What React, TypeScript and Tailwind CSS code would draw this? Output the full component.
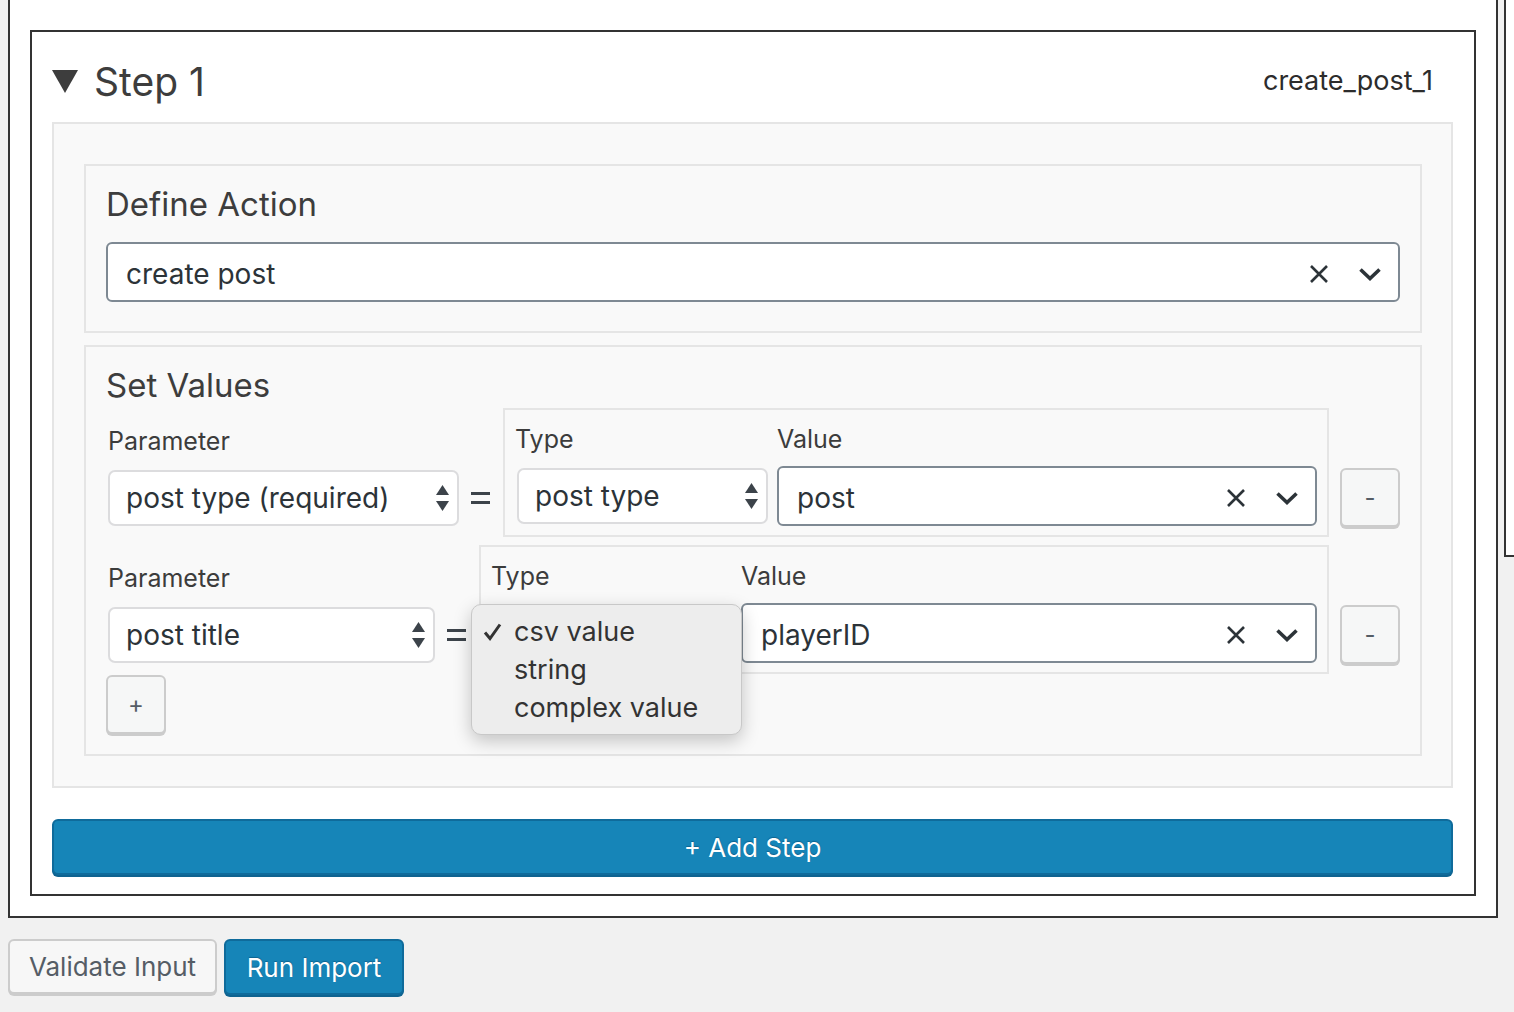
import React from "react";

function XIcon() {
  return (
    <svg width="20" height="20" viewBox="0 0 20 20" className="shrink-0">
      <path d="M2 2 L18 18 M18 2 L2 18" stroke="#2c3338" strokeWidth="2.6" fill="none" />
    </svg>
  );
}

function Chevron() {
  return (
    <svg width="24" height="16" viewBox="0 0 24 16" className="shrink-0">
      <path d="M2.5 3.5 L12 12.5 L21.5 3.5" stroke="#2c3338" strokeWidth="3.6" fill="none" />
    </svg>
  );
}

function Stepper() {
  return (
    <svg width="13" height="26" viewBox="0 0 13 26" className="shrink-0">
      <polygon points="0,10 6.5,0 13,10" fill="#3c434a" />
      <polygon points="0,16 13,16 6.5,26" fill="#3c434a" />
    </svg>
  );
}

function NativeSelect({ text, className }: { text: string; className: string }) {
  return (
    <div
      className={
        "h-[56px] rounded-[7px] border-2 border-[#dcdcde] bg-white flex items-center justify-between pl-[16px] pr-[8px] text-[28px] text-[#2c3338] " +
        className
      }
    >
      <span>{text}</span>
      <Stepper />
    </div>
  );
}

function Combo({ text, className = "" }: { text: string; className?: string }) {
  return (
    <div
      className={
        "h-[60px] rounded-[6px] border-2 border-[#7e8993] bg-white flex items-center pl-[18px] pr-[16px] pt-[3px] text-[28px] text-[#2c3338] " +
        className
      }
    >
      <span className="flex-1">{text}</span>
      <XIcon />
      <span className="w-[29px]" />
      <Chevron />
    </div>
  );
}

function SmallButton({ label }: { label: string }) {
  return (
    <button className="w-[60px] h-[59px] rounded-[6px] border-2 border-[#cccccc] bg-[#f6f7f7] shadow-[0_2px_0_#cccccc] text-[24px] text-[#555d66] flex items-center justify-center">
      {label}
    </button>
  );
}

function Label({ children }: { children: React.ReactNode }) {
  return <div className="h-[30px] leading-[30px] text-[25px] text-[#3c3c3c]">{children}</div>;
}

function Equals() {
  return (
    <div className="self-end mb-[11px] h-[56px] flex items-center">
      <svg width="19" height="12" viewBox="0 0 19 12">
        <rect x="0" y="0" width="19" height="3" fill="#3c434a" />
        <rect x="0" y="9" width="19" height="3" fill="#3c434a" />
      </svg>
    </div>
  );
}

function ParamRow({
  param,
  paramWidth,
  typeText,
  typeWidth,
  value,
  open,
}: {
  param: string;
  paramWidth: string;
  typeText: string;
  typeWidth: string;
  value: string;
  open?: boolean;
}) {
  return (
    <div className="flex items-end">
      <div className="ml-[2px] mb-[11px] flex flex-col">
        <Label>Parameter</Label>
        <NativeSelect text={param} className={"mt-[14px] " + paramWidth} />
      </div>
      <div className="ml-[12px]">
        <Equals />
      </div>
      <div className="ml-[13px] flex-1 flex items-end border-2 border-[#e5e5e5] bg-[#f9f9f9] pl-[10px] pr-[10px] pt-[14px] pb-[9px]">
        <div className="flex flex-col mb-[2px]">
          <Label>Type</Label>
          <div className="relative mt-[14px] ml-[2px]">
            <NativeSelect text={typeText} className={typeWidth} />
            {open && (
              <div className="absolute left-[-22px] top-[-1px] w-[271px] h-[131px] rounded-[10px] border border-[#c8c8c8] bg-[#ededed] shadow-[0_6px_18px_rgba(0,0,0,0.22)] pt-[8px] text-[27px] text-[#333]">
                <div className="h-[38px] leading-[38px] flex items-center">
                  <svg width="42" height="38" viewBox="0 0 42 38" className="shrink-0">
                    <path d="M13 19.5 L18 25.5 L28 11.5" stroke="#333" strokeWidth="3" fill="none" />
                  </svg>
                  <span>csv value</span>
                </div>
                <div className="h-[38px] leading-[38px] pl-[42px]">string</div>
                <div className="h-[38px] leading-[38px] pl-[42px]">complex value</div>
              </div>
            )}
          </div>
        </div>
        <div className="ml-[9px] flex-1 flex flex-col">
          <Label>Value</Label>
          <Combo text={value} className="mt-[12px]" />
        </div>
      </div>
      <div className="ml-[11px] mb-[10px]">
        <SmallButton label="-" />
      </div>
    </div>
  );
}

export default function App() {
  return (
    <div className="w-[1514px] h-[1012px] overflow-hidden bg-[#f1f1f1] font-[family-name:Inter,sans-serif] antialiased">
      <div className="flex items-start">
        <div className="ml-[8px] w-[1490px] shrink-0 border-2 border-t-0 border-[#333] bg-white px-[20px] pt-[30px] pb-[20px]">
          <div className="border-2 border-[#333] pl-[20px] pr-[21px] pb-[19px]">
            <div className="h-[90px] pt-[9px] flex items-center">
              <svg width="26" height="23" viewBox="0 0 26 23" className="shrink-0">
                <polygon points="0,0 26,0 13,23" fill="#3d3d3d" />
              </svg>
              <span className="ml-[16px] text-[39px] leading-[41px] text-[#3d3d3d]">Step 1</span>
              <span className="ml-auto mr-[20px] text-[27px] text-[#2c2c2c]">create_post_1</span>
            </div>

            <div className="border-2 border-[#e5e5e5] bg-[#f9f9f9] pl-[30px] pr-[29px] pt-[40px] pb-[30px] flex flex-col gap-[12px]">
              <div className="border-2 border-[#e5e5e5] px-[20px] pt-[18px] pb-[29px]">
                <div className="h-[40px] leading-[40px] text-[33px] text-[#3d3d3d]">Define Action</div>
                <Combo text="create post" className="mt-[18px]" />
              </div>

              <div className="border-2 border-[#e5e5e5] pl-[20px] pr-[20px] pt-[18px] pb-[20px]">
                <div className="h-[40px] leading-[40px] text-[33px] text-[#3d3d3d]">Set Values</div>
                <div className="mt-[3px] flex flex-col gap-[8px]">
                  <ParamRow
                    param="post type (required)"
                    paramWidth="w-[351px]"
                    typeText="post type"
                    typeWidth="w-[251px]"
                    value="post"
                  />
                  <ParamRow
                    param="post title"
                    paramWidth="w-[327px]"
                    typeText=""
                    typeWidth="w-[239px]"
                    value="playerID"
                    open
                  />
                </div>
                <div className="mt-[1px]">
                  <SmallButton label="+" />
                </div>
              </div>
            </div>

            <button className="mt-[31px] w-full h-[56px] rounded-[6px] border-2 border-[#0f6b9b] bg-[#1685b8] shadow-[0_2px_0_#0e6390] text-[26px] text-white [text-shadow:0_-1px_1px_#0e6390]">
              + Add Step
            </button>
          </div>
        </div>
        <div className="ml-[6px] w-[12px] h-[557px] border-l-2 border-b-2 border-[#333] bg-white" />
      </div>

      <div className="ml-[8px] mt-[21px] flex gap-[7px]">
        <button className="w-[209px] h-[55px] rounded-[6px] border-2 border-[#cccccc] bg-[#f7f7f7] shadow-[0_2px_0_#cccccc] text-[26px] text-[#555d66]">
          Validate Input
        </button>
        <button className="w-[180px] h-[56px] rounded-[6px] border-2 border-[#0f6b9b] bg-[#1685b8] shadow-[0_2px_0_#0e6390] text-[26px] text-white [text-shadow:0_-1px_1px_#0e6390]">
          Run Import
        </button>
      </div>
    </div>
  );
}
